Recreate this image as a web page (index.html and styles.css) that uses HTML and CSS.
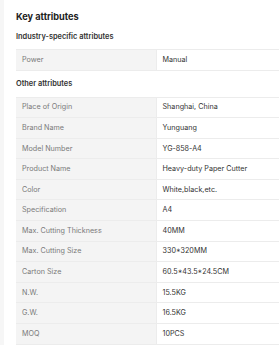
FILE: index.html
```html
<!DOCTYPE html>
<html>
<head>
<meta charset="utf-8">
<link rel="stylesheet" href="styles.css">
</head>
<body>
<div class="page">
  <h2 class="title">Key attributes</h2>
  <h3 class="subtitle">Industry-specific attributes</h3>
  <table class="attrs">
    <tr><td class="k">Power</td><td class="v">Manual</td></tr>
  </table>
  <h3 class="subtitle other">Other attributes</h3>
  <table class="attrs">
    <tr><td class="k">Place of Origin</td><td class="v">Shanghai, China</td></tr>
    <tr><td class="k">Brand Name</td><td class="v">Yunguang</td></tr>
    <tr><td class="k">Model Number</td><td class="v">YG-858-A4</td></tr>
    <tr><td class="k">Product Name</td><td class="v">Heavy-duty Paper Cutter</td></tr>
    <tr><td class="k">Color</td><td class="v">White,black,etc.</td></tr>
    <tr><td class="k">Specification</td><td class="v">A4</td></tr>
    <tr><td class="k">Max. Cutting Thickness</td><td class="v">40MM</td></tr>
    <tr><td class="k">Max. Cutting Size</td><td class="v">330*320MM</td></tr>
    <tr><td class="k">Carton Size</td><td class="v">60.5*43.5*24.5CM</td></tr>
    <tr><td class="k">N.W.</td><td class="v">15.5KG</td></tr>
    <tr><td class="k">G.W.</td><td class="v">16.5KG</td></tr>
    <tr><td class="k">MOQ</td><td class="v">10PCS</td></tr>
  </table>
</div>
</body>
</html>
```

FILE: styles.css
```css
html, body {
  margin: 0;
  padding: 0;
  background: #ffffff;
}
body {
  font-family: Inter, "Noto Sans", sans-serif;
  color: #222;
}
.page {
  border-left: 4px solid #f6f6f6;
  padding: 10px 0 0 12px;
}
.title {
  margin: 0;
  font-size: 9.2px;
  font-weight: 700;
  line-height: 14px;
  color: #222;
}
.subtitle {
  margin: 7px 0 6px;
  font-size: 7.4px;
  font-weight: 600;
  line-height: 12px;
  color: #333;
}
.subtitle.other {
  margin: 7px 0 7px;
}
.attrs {
  border-collapse: collapse;
  width: 100%;
  table-layout: fixed;
}
.attrs td {
  height: 20.58px;
  padding: 0 6px;
  box-sizing: border-box;
  border: 1px solid #ececec;
  font-size: 7.2px;
  line-height: 10px;
  vertical-align: middle;
  white-space: nowrap;
  overflow: hidden;
}
.attrs .k {
  width: 140px;
  background: #f4f4f4;
  color: #7a7a7a;
  border-left: none;
}
.attrs .v {
  color: #333;
  background: #fff;
  border-right: none;
}
```
